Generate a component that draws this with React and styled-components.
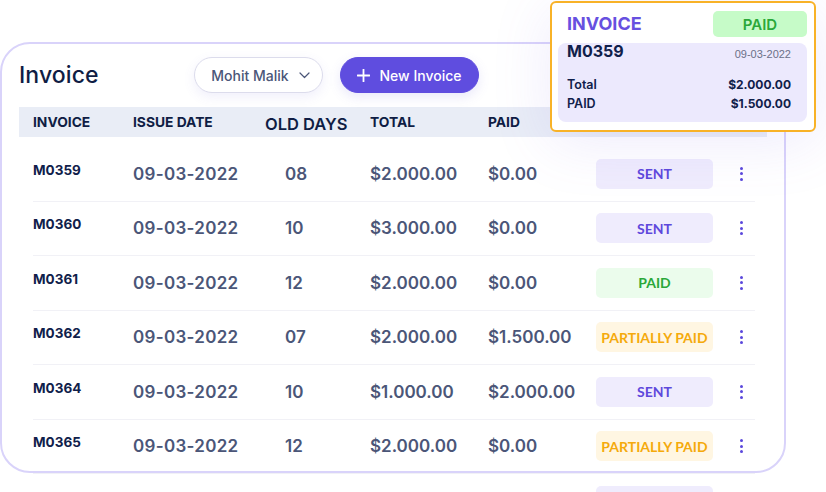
import React from "react";
import styled, { createGlobalStyle } from "styled-components";

const GlobalStyle = createGlobalStyle`
  * { box-sizing: border-box; }
  html, body { margin: 0; padding: 0; background: #ffffff; }
  body { font-family: Inter, "Noto Sans", "Liberation Sans", sans-serif; }
`;

const Page = styled.div`
  position: relative;
  width: 826px;
  height: 492px;
  overflow: hidden;
  background: #ffffff;
  padding-top: 42px;
`;

const Card = styled.div`
  width: 786px;
  height: 431px;
  border: 2px solid #d9d3fa;
  border-radius: 30px;
  padding: 13px 0 0 17px;
`;

const Header = styled.div`
  display: flex;
  align-items: center;
  height: 36px;
`;

const Title = styled.div`
  width: 175px;
  font-size: 23px;
  font-weight: 500;
  color: #0f1d44;
  letter-spacing: 0.1px;
`;

const Pill = styled.div`
  display: flex;
  align-items: center;
  justify-content: center;
  gap: ${(p) => (p.primary ? "9px" : "10px")};
  height: 36px;
  width: ${(p) => p.width}px;
  padding-left: ${(p) => (p.primary ? "0" : "4px")};
  border-radius: 18px;
  font-size: 14px;
  font-weight: 500;
  color: ${(p) => (p.primary ? "#ffffff" : "#4b5678")};
  background: ${(p) => (p.primary ? "#5f4ddf" : "#ffffff")};
  border: 1px solid ${(p) => (p.primary ? "#5f4ddf" : "#dcdcec")};
  box-shadow: 0 4px 12px rgba(110, 100, 220, ${(p) => (p.primary ? 0.15 : 0.1)});
  margin-right: 17px;
`;

const Table = styled.div`
  margin-top: 14px;
  width: 748px;
`;

const HeadBar = styled.div`
  display: grid;
  grid-template-columns: 114px 132px 105px 118px 108px;
  align-items: center;
  height: 30px;
  background: #e9edf6;
`;

const HeadCell = styled.div`
  font-size: ${(p) => (p.big ? "16.5px" : "13.8px")};
  font-weight: ${(p) => (p.big ? 600 : 700)};
  color: #0f1d44;
  padding-left: ${(p) => (p.first ? "14px" : "0")};
  margin-top: ${(p) => (p.big ? "3px" : "0")};
`;

const Rows = styled.div`
  margin: 10px 0 0 14px;
  width: 722px;
`;

const Row = styled.div`
  display: grid;
  grid-template-columns: 100px 132px 105px 118px 108px 117px 1fr;
  align-items: center;
  height: 54.5px;
  border-bottom: 1.5px solid #f1f1f6;
`;

const Id = styled.div`
  font-size: 13.5px;
  font-weight: 700;
  color: #10204a;
  margin-bottom: 8px;
`;

const Value = styled.div`
  font-size: ${(p) => p.size || 17}px;
  font-weight: 600;
  color: #4b5678;
  letter-spacing: ${(p) => p.spacing || 0}px;
  padding-left: ${(p) => p.indent || 0}px;
`;

const badgeColors = {
  SENT: { bg: "#efecfd", fg: "#5e48dc" },
  PAID: { bg: "#ebfcec", fg: "#2aa839" },
  "PARTIALLY PAID": { bg: "#fff6e2", fg: "#f5aa0c" },
};

const Badge = styled.div`
  height: 30px;
  border-radius: 5px;
  display: flex;
  align-items: center;
  justify-content: center;
  font-family: Lato, "Liberation Sans", sans-serif;
  font-size: 14px;
  font-weight: 700;
  background: ${(p) => badgeColors[p.status].bg};
  color: ${(p) => badgeColors[p.status].fg};
`;

const Dots = styled.div`
  padding-left: 27px;
  display: flex;
  flex-direction: column;
  gap: 2.5px;
  & > span {
    display: block;
    width: 3px;
    height: 3px;
    border-radius: 50%;
    background: #5b48dc;
  }
`;

const Popup = styled.div`
  position: absolute;
  left: 550px;
  top: 1px;
  width: 266px;
  height: 131px;
  background: #ffffff;
  border: 2px solid #f8b227;
  border-radius: 6px;
  padding: 8px 7px 0 6px;
  box-shadow: 0 10px 60px rgba(120, 100, 230, 0.13);
`;

const PopTop = styled.div`
  display: flex;
  align-items: center;
  justify-content: space-between;
  height: 26px;
  padding-left: 9px;
`;

const PopTitle = styled.div`
  font-size: 18px;
  font-weight: 700;
  color: #6750e0;
  margin-bottom: 1px;
`;

const PopBadge = styled.div`
  width: 94px;
  height: 26px;
  border-radius: 5px;
  background: #c6fbc8;
  color: #2aa839;
  font-size: 15px;
  font-weight: 600;
  display: flex;
  align-items: center;
  justify-content: center;
`;

const PopBody = styled.div`
  margin-top: 6px;
  height: 79px;
  background: #ece9fd;
  border-radius: 8px;
  padding: 2px 16px 0 9px;
`;

const PopLine = styled.div`
  display: flex;
  justify-content: space-between;
  align-items: ${(p) => (p.top ? "flex-end" : "center")};
  height: ${(p) => p.h}px;
  margin-top: ${(p) => p.gap || 0}px;
  color: #10204a;
`;

const PopId = styled.div`
  font-size: 16px;
  font-weight: 700;
`;

const PopDate = styled.div`
  font-family: "Liberation Sans", Arial, sans-serif;
  font-size: 11px;
  color: #6b7088;
  margin-bottom: 1px;
`;

const PopLabel = styled.div`
  font-size: 12.5px;
  font-weight: 600;
`;

const PopAmount = styled.div`
  font-size: 12px;
  font-weight: 700;
`;

// the last row is scrolled mostly out of view; only its amounts' tops show
const rows = [
  ["M0359", "09-03-2022", "08", "$2.000.00", "$0.00", "SENT"],
  ["M0360", "09-03-2022", "10", "$3.000.00", "$0.00", "SENT"],
  ["M0361", "09-03-2022", "12", "$2.000.00", "$0.00", "PAID"],
  ["M0362", "09-03-2022", "07", "$2.000.00", "$1.500.00", "PARTIALLY PAID"],
  ["M0364", "09-03-2022", "10", "$1.000.00", "$2.000.00", "SENT"],
  ["M0365", "09-03-2022", "12", "$2.000.00", "$0.00", "PARTIALLY PAID"],
  ["", "", "", "$2.000.00", "$0.00", "SENT"],
];

const Chevron = () => (
  <svg width="11" height="7" viewBox="0 0 11 7" fill="none">
    <path d="M1 1l4.5 4.5L10 1" stroke="#4b5678" strokeWidth="1.2" strokeLinecap="round" strokeLinejoin="round" />
  </svg>
);

const Plus = () => (
  <svg width="13" height="13" viewBox="0 0 13 13" fill="none">
    <path d="M6.5 0.5v12M0.5 6.5h12" stroke="#ffffff" strokeWidth="1.8" strokeLinecap="round" />
  </svg>
);

export default function App() {
  return (
    <>
      <GlobalStyle />
      <Page>
        <Card>
          <Header>
            <Title>Invoice</Title>
            <Pill width={129}>
              Mohit Malik <Chevron />
            </Pill>
            <Pill primary width={139}>
              <Plus /> New Invoice
            </Pill>
          </Header>
          <Table>
            <HeadBar>
              <HeadCell first>INVOICE</HeadCell>
              <HeadCell>ISSUE DATE</HeadCell>
              <HeadCell big>OLD DAYS</HeadCell>
              <HeadCell>TOTAL</HeadCell>
              <HeadCell>PAID</HeadCell>
            </HeadBar>
            <Rows>
              {rows.map(([id, date, days, total, paid, status], i) => (
                <Row key={i}>
                  <Id>{id}</Id>
                  <Value size={17} spacing={0.3}>{date}</Value>
                  <Value indent={20}>{days}</Value>
                  <Value>{total}</Value>
                  <Value>{paid}</Value>
                  <Badge status={status}>{status}</Badge>
                  <Dots>
                    <span />
                    <span />
                    <span />
                  </Dots>
                </Row>
              ))}
            </Rows>
          </Table>
        </Card>
        <Popup>
          <PopTop>
            <PopTitle>INVOICE</PopTitle>
            <PopBadge>PAID</PopBadge>
          </PopTop>
          <PopBody>
            <PopLine top h={16}>
              <PopId>M0359</PopId>
              <PopDate>09-03-2022</PopDate>
            </PopLine>
            <PopLine gap={13} h={20}>
              <PopLabel>Total</PopLabel>
              <PopAmount>$2.000.00</PopAmount>
            </PopLine>
            <PopLine h={18}>
              <PopLabel>PAID</PopLabel>
              <PopAmount>$1.500.00</PopAmount>
            </PopLine>
          </PopBody>
        </Popup>
      </Page>
    </>
  );
}
